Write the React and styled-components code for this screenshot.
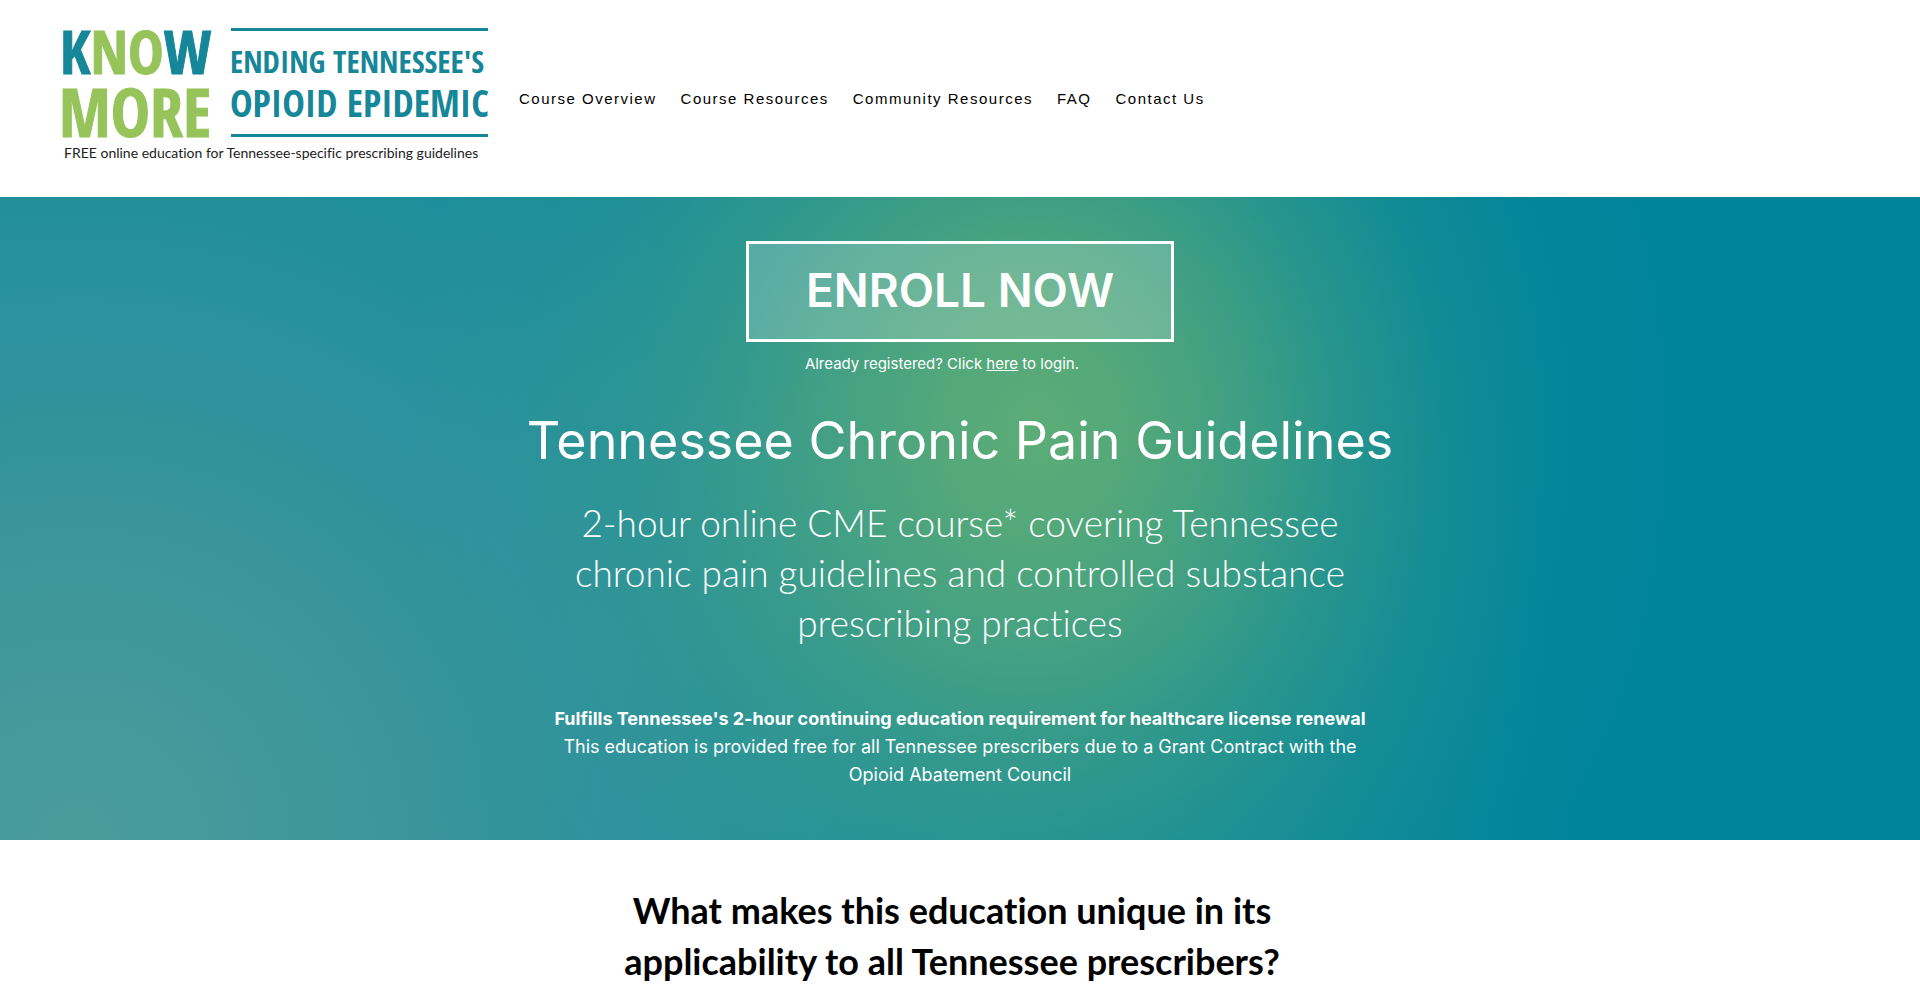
import styled, { createGlobalStyle } from "styled-components";

const GlobalStyle = createGlobalStyle`
  * {
    box-sizing: border-box;
  }
  body {
    margin: 0;
    background-color: #ffffff;
    color: #000000;
    font-family: Inter, "Liberation Sans", sans-serif;
    font-variant-ligatures: none;
  }
`;

const Header = styled.header`
  display: flex;
  align-items: flex-start;
  gap: 31px;
  padding: 27px 63px 34px;
`;
const LogoLink = styled.a`
  display: flex;
  flex-direction: column;
  gap: 4px;
  color: #000000;
  text-decoration: none;
`;
const Logo = styled.svg`
  display: block;
  width: 425px;
  height: 112px;
  overflow: visible;
  font-family: "Open Sans Condensed", "Liberation Sans Narrow", "DejaVu Sans Condensed", sans-serif;
  font-weight: 700;
`;
const Tagline = styled.span`
  padding-left: 1px;
  color: #222222;
  font-family: Lato, sans-serif;
  font-size: 14px;
  line-height: 20px;
  white-space: nowrap;
`;
const Nav = styled.nav`
  display: flex;
  flex-wrap: wrap;
  gap: 24px;
  padding-top: 62px;
`;
const NavLink = styled.a`
  color: #000000;
  font-family: "Liberation Sans", Arial, sans-serif;
  font-size: 15px;
  line-height: 20px;
  letter-spacing: 0.1em;
  text-decoration: none;
  white-space: nowrap;
`;

const Hero = styled.section`
  display: flex;
  flex-direction: column;
  align-items: center;
  padding: 44px 24px 51px;
  color: #ffffff;
  text-align: center;
  background:
    radial-gradient(
      ellipse 33% 112% at 54% 36%,
      #5cac76 0%,
      rgba(92, 172, 118, 0.88) 15%,
      rgba(92, 172, 118, 0.66) 31%,
      rgba(92, 172, 118, 0.38) 48%,
      rgba(92, 172, 118, 0.18) 64%,
      rgba(92, 172, 118, 0.06) 82%,
      rgba(92, 172, 118, 0) 100%
    ),
    radial-gradient(
      ellipse 78% 220% at 4% 100%,
      #4a9c9a 0%,
      #3f979b 17%,
      #33939a 29%,
      #2e929f 35%,
      #25909c 43%,
      #1a8d9c 55%,
      #0f8a9a 76%,
      #00849c 100%
    );
`;
const Enroll = styled.div`
  display: flex;
  flex-direction: column;
  gap: 12px;
`;
const EnrollButton = styled.button`
  padding: 16px 57px 19px;
  border: 3px solid #ffffff;
  background-color: rgba(255, 255, 255, 0.2);
  color: #ffffff;
  font-family: Inter, sans-serif;
  font-size: 46px;
  font-weight: 600;
  line-height: 60px;
  cursor: pointer;
`;
const Login = styled.p`
  margin: 0;
  padding-left: 59px;
  font-size: 15px;
  line-height: 20px;
  text-align: left;
`;
const LoginLink = styled.a`
  color: inherit;
  text-decoration: underline;
`;
const Title = styled.h1`
  margin: 32px 0 0;
  font-size: 52px;
  font-weight: 400;
  line-height: 70px;
`;
const Subtitle = styled.p`
  max-width: 820px;
  margin: 22px 0 0;
  font-family: Lato, sans-serif;
  font-size: 37px;
  font-weight: 300;
  line-height: 50px;
`;
const Details = styled.p`
  max-width: 840px;
  margin: 57px 0 0;
  font-size: 18px;
  line-height: 28px;
`;

const Unique = styled.section`
  padding: 45px 16px 6px 0;
  text-align: center;
`;
const UniqueTitle = styled.h2`
  max-width: 700px;
  margin: 0 auto;
  font-family: Lato, sans-serif;
  font-size: 36px;
  font-weight: 700;
  line-height: 51px;
`;

const links = ["Course Overview", "Course Resources", "Community Resources", "FAQ", "Contact Us"];

const KnowMoreLogo = () => (
  <Logo viewBox="0 0 425 112" role="img" aria-label="Know More: Ending Tennessee's Opioid Epidemic">
    <text x="-3" y="47" fontSize="60" fill="#97c45a" stroke="#97c45a">
      <tspan fill="#168699" stroke="#168699">K</tspan>NO<tspan fill="#168699" stroke="#168699">W</tspan>
    </text>
    <text x="-4" y="110" fontSize="66" fill="#97c45a" stroke="#97c45a">MORE</text>
    <rect x="168" y="1" width="257" height="3" fill="#168699" />
    <text x="167" y="46" fontSize="31" fill="#168699">ENDING TENNESSEE'S</text>
    <text x="167" y="90" fontSize="38" fill="#168699">OPIOID EPIDEMIC</text>
    <rect x="168" y="107" width="257" height="3" fill="#168699" />
  </Logo>
);

const App = () => {
  return (
    <>
      <GlobalStyle />
      <Header>
        <LogoLink href="#home">
          <KnowMoreLogo />
          <Tagline>FREE online education for Tennessee-specific prescribing guidelines</Tagline>
        </LogoLink>
        <Nav>
          {links.map((label) => (
            <NavLink key={label} href={`#${label.toLowerCase().replace(/ /g, "-")}`}>
              {label}
            </NavLink>
          ))}
        </Nav>
      </Header>
      <main>
        <Hero>
          <Enroll>
            <EnrollButton type="button">ENROLL NOW</EnrollButton>
            <Login>
              Already registered? Click <LoginLink href="#login">here</LoginLink> to login.
            </Login>
          </Enroll>
          <Title>Tennessee Chronic Pain Guidelines</Title>
          <Subtitle>
            2-hour online CME course* covering Tennessee chronic pain guidelines and controlled substance prescribing
            practices
          </Subtitle>
          <Details>
            <strong>Fulfills Tennessee's 2-hour continuing education requirement for healthcare license renewal</strong>
            <br />
            This education is provided free for all Tennessee prescribers due to a Grant Contract with the Opioid
            Abatement Council
          </Details>
        </Hero>
        <Unique>
          <UniqueTitle>What makes this education unique in its applicability to all Tennessee prescribers?</UniqueTitle>
        </Unique>
      </main>
    </>
  );
};

export default App;
